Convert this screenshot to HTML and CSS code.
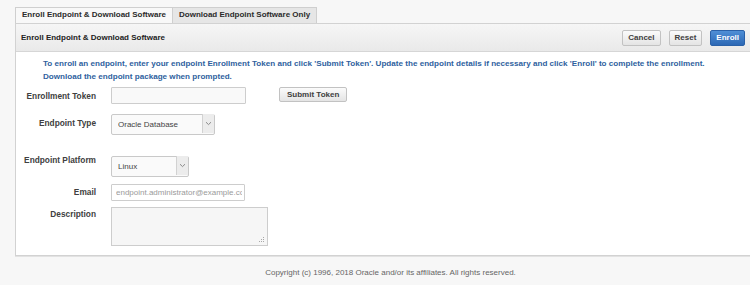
FILE: index.html
```html
<!DOCTYPE html>
<html>
	<head>
		<meta charset="UTF-8">
		<title>Enroll Endpoint</title>
		<link rel="stylesheet" href="styles.css">
	</head>
	<body>
		<div class="page">
			<div class="tabs">
				<div class="tab tab-on">Enroll Endpoint &amp; Download Software</div>
				<div class="tab">Download Endpoint Software Only</div>
			</div>
			<div class="panel">
				<div class="panel-head">
					<div class="panel-title">Enroll Endpoint &amp; Download Software</div>
					<button class="btn">Cancel</button>
					<button class="btn">Reset</button>
					<button class="btn btn-hot">Enroll</button>
				</div>
				<div class="panel-body">
					<p class="intro">To enroll an endpoint, enter your endpoint Enrollment Token and click 'Submit Token'. Update the endpoint details if necessary and click 'Enroll' to complete the enrollment. Download the endpoint package when prompted.</p>

					<div class="row row-token">
						<label class="lbl lbl-token">Enrollment Token</label>
						<input class="txt txt-token" type="text">
						<button class="btn btn-submit">Submit Token</button>
					</div>

					<div class="row row-type">
						<label class="lbl lbl-type">Endpoint Type</label>
						<div class="sel sel-type">
							<select><option>Oracle Database</option></select>
							<span class="sel-arrow"><svg width="7" height="5" viewBox="0 0 7 5"><path d="M1 1.2 L3.5 3.6 L6 1.2" fill="none" stroke="#8a8a8a" stroke-width="1"/></svg></span>
						</div>
					</div>

					<div class="row row-platform">
						<label class="lbl lbl-platform">Endpoint Platform</label>
						<div class="sel sel-platform">
							<select><option>Linux</option></select>
							<span class="sel-arrow"><svg width="7" height="5" viewBox="0 0 7 5"><path d="M1 1.2 L3.5 3.6 L6 1.2" fill="none" stroke="#8a8a8a" stroke-width="1"/></svg></span>
						</div>
					</div>

					<div class="row row-email">
						<label class="lbl lbl-email">Email</label>
						<input class="txt txt-email" type="text" placeholder="endpoint.administrator@example.com">
					</div>

					<div class="row row-desc">
						<label class="lbl lbl-desc">Description</label>
						<div class="area-wrap">
							<textarea class="area"></textarea>
							<svg class="grip" width="6" height="6" viewBox="0 0 6 6"><g fill="#a8a8a8"><rect x="4" y="0" width="1" height="1"/><rect x="2" y="2" width="1" height="1"/><rect x="4" y="2" width="1" height="1"/><rect x="0" y="4" width="1" height="1"/><rect x="2" y="4" width="1" height="1"/><rect x="4" y="4" width="1" height="1"/></g></svg>
						</div>
					</div>
				</div>
			</div>
			<div class="footer">Copyright (c) 1996, 2018 Oracle and/or its affiliates. All rights reserved.</div>
		</div>
	</body>
</html>
```

FILE: styles.css
```css
*{
	padding: 0;
	margin: 0;
	box-sizing: border-box;
}
body{
	background: #f7f7f7;
	font-family: "Liberation Sans", Arial, sans-serif;
	color: #333;
	overflow: hidden;
}
.page{
	padding: 7px 0 0 15px;
}

/* tabs */
.tabs{
	display: flex;
	height: 16px;
}
.tab{
	padding: 0 6px;
	border: 1px solid #cfcfcf;
	border-bottom: none;
	font-size: 8px;
	font-weight: bold;
	line-height: 14px;
	color: #2b2b2b;
	background: #e6e6e6;
}
.tab-on{
	background: #f8f8f8;
	border-right: none;
}

/* panel */
.panel{
	margin-right: -3px;
	border: 1px solid #d2d2d2;
	background: #fff;
	box-shadow: 0 1px 0 #e2e2e2;
}
.panel-head{
	display: flex;
	align-items: center;
	gap: 8px;
	height: 28px;
	padding: 0 7px 0 5px;
	background: linear-gradient(#f6f6f6, #e9e9e9);
	border-bottom: 1px solid #d6d6d6;
}
.panel-title{
	flex: 1;
	font-size: 8px;
	font-weight: bold;
	color: #222;
}
.btn{
	height: 16px;
	padding: 0 5px;
	font-family: inherit;
	font-size: 8px;
	font-weight: bold;
	color: #404040;
	background: linear-gradient(#fbfbfb, #e4e4e4);
	border: 1px solid #c2c2c2;
	border-radius: 2px;
}
.btn-hot{
	color: #fff;
	background: linear-gradient(#4f8fd6, #2c68b5);
	border-color: #2a61a8;
}

/* body */
.panel-body{
	padding: 5px 0 9px 27px;
}
.intro{
	font-size: 8.1px;
	font-weight: bold;
	line-height: 13px;
	color: #2f5f9e;
	padding-right: 40px;
}
.row{
	display: flex;
	align-items: flex-start;
	margin-left: -27px;
}
.lbl{
	width: 80px;
	margin-right: 15px;
	text-align: right;
	font-size: 8.3px;
	font-weight: bold;
	line-height: 10px;
	color: #404040;
}
.row-token{ margin-top: 4px; }
.row-type{ margin-top: 9px; }
.row-platform{ margin-top: 21px; }
.row-email{ margin-top: 8px; }
.row-desc{ margin-top: 6px; }
.lbl-token{ padding-top: 4px; }
.lbl-type{ padding-top: 5px; }
.lbl-platform{ padding-top: 0; }
.lbl-email{ padding-top: 3px; }
.lbl-desc{ padding-top: 2px; }

.txt{
	height: 17px;
	padding: 0 4px;
	font-family: inherit;
	font-size: 8px;
	color: #444;
	border: 1px solid #cdcdcd;
	border-radius: 1px;
	background: #f9f9f9;
	outline: none;
}
.txt-token{ width: 135px; }
.txt-email{ width: 134px; background: #fff; padding: 0 2px 0 4px; }
.txt::placeholder{ color: #9a9a9a; }
.btn-submit{
	margin-left: 33px;
	height: 15px;
	padding: 0 7px;
}

.sel{
	position: relative;
	height: 21px;
}
.sel-type{ width: 104px; }
.sel-platform{ width: 78px; }
.sel select{
	-webkit-appearance: none;
	appearance: none;
	width: 100%;
	height: 21px;
	padding: 0 0 0 6px;
	font-family: inherit;
	font-size: 8px;
	color: #444;
	background: #fafafa;
	border: 1px solid #c9c9c9;
	border-radius: 2px;
	outline: none;
}
.sel-arrow{
	position: absolute;
	top: 1px;
	right: 1px;
	width: 12px;
	height: 19px;
	display: flex;
	align-items: center;
	justify-content: center;
	background: #ececec;
	border-left: 1px solid #d2d2d2;
}
.area-wrap{
	position: relative;
	height: 39px;
}
.area{
	display: block;
	width: 157px;
	height: 39px;
	border: 1px solid #cdcdcd;
	background: #f6f6f6;
	resize: none;
	outline: none;
}
.grip{
	position: absolute;
	right: 3px;
	bottom: 3px;
}

.footer{
	padding: 12px 0 0 16px;
	text-align: center;
	font-size: 8px;
	color: #666;
}
```
